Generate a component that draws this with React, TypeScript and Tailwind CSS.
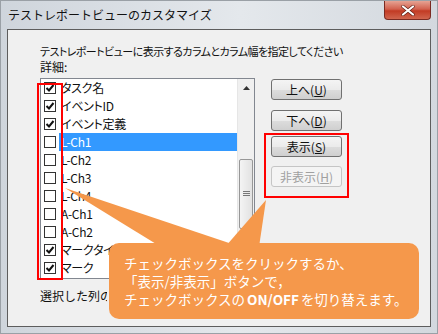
import * as React from "react";

const jp = "font-['Noto_Sans_CJK_JP','Noto_Sans',sans-serif]";

const columns = [
  {label: "タスク名", checked: true},
  {label: "イベントID", checked: true},
  {label: "イベント定義", checked: true},
  {label: "L-Ch1", checked: false, selected: true},
  {label: "L-Ch2", checked: false},
  {label: "L-Ch3", checked: false},
  {label: "L-Ch4", checked: false},
  {label: "A-Ch1", checked: false},
  {label: "A-Ch2", checked: false},
  {label: "マークタイプ", checked: true},
  {label: "マーク", checked: true}
];

function CheckBox({checked}: {checked: boolean}) {
  return (
    <div className="w-[12px] h-[12px] border border-[#333] bg-white flex items-center justify-center shrink-0">
      {checked && (
        <svg width="10" height="10" viewBox="0 0 10 10">
          <path d="M1.5 5 L4 7.5 L8.5 2" fill="none" stroke="#111" strokeWidth="2" />
        </svg>
      )}
    </div>
  );
}

function Row({label, checked, selected}: {label: string; checked: boolean; selected?: boolean}) {
  return (
    <div className="flex items-center h-[18px] pl-[3px]">
      <CheckBox checked={checked} />
      <div
        className={`ml-[3px] flex-1 h-full flex items-center pl-[2px] ${
          selected ? "bg-[#3399ff] text-white" : "text-[#111]"
        }`}>
        {label}
      </div>
    </div>
  );
}

function WinButton({children, disabled}: {children: React.ReactNode; disabled?: boolean}) {
  return (
    <div
      className={`w-[71px] h-[21px] rounded-[3px] border flex items-center justify-center text-[12px] ${
        disabled
          ? "border-[#c5c5c5] bg-[#f4f4f4] text-[#a0a0a0]"
          : "border-[#707070] bg-[linear-gradient(#f4f4f4_0%,#ebebeb_50%,#dddddd_50%,#cfcfcf_100%)] text-[#111]"
      }`}>
      {children}
    </div>
  );
}

function ScrollBar() {
  return (
    <div className="w-[17px] h-full flex flex-col bg-[#f0f0f0] border-l border-[#e6e6e6]">
      <div className="h-[17px] flex items-center justify-center">
        <svg width="7" height="4" viewBox="0 0 7 4">
          <path d="M0 4 L3.5 0 L7 4 Z" fill="#333" />
        </svg>
      </div>
      <div className="h-[63px]" />
      <div className="mx-[1px] h-[70px] rounded-[2px] border border-[#979797] bg-[linear-gradient(90deg,#f4f4f4,#e2e2e2)] flex items-center justify-center">
        <svg width="7" height="6" viewBox="0 0 7 6">
          <path d="M0 0.5 H7 M0 2.5 H7 M0 4.5 H7" stroke="#777" strokeWidth="1" />
        </svg>
      </div>
      <div className="flex-1" />
    </div>
  );
}

export default function App() {
  return (
    <div className={`relative w-[438px] h-[334px] overflow-hidden bg-[linear-gradient(90deg,#cfd5dc,#e4e8ec_55%,#d3d8de)] border border-[#9aa0a6] flex flex-col ${jp}`}>
      {/* title bar */}
      <div className="h-[28px] flex items-start justify-between shrink-0">
        <div className="pl-[7px] pt-[6px] text-[12px] leading-[16px] text-[#111]">
          テストレポートビューのカスタマイズ
        </div>
        <div className="mr-[6px] w-[47px] h-[19px] rounded-b-[4px] border border-t-0 border-[#7a2b22] bg-[linear-gradient(#e6a393_0%,#d2614e_45%,#c23b24_55%,#d0654e_100%)] flex items-center justify-center">
          <svg width="14" height="11" viewBox="0 0 14 11">
            <path d="M2 1.5 L12 9.5 M12 1.5 L2 9.5" stroke="#5a1a10" strokeWidth="3.4" strokeLinecap="round" />
            <path d="M2 1.5 L12 9.5 M12 1.5 L2 9.5" stroke="#fff" strokeWidth="2.2" strokeLinecap="round" />
          </svg>
        </div>
      </div>

      {/* client area */}
      <div className="mx-[6px] mb-[6px] flex-1 bg-[#f0f0f0] border border-[#5d5d5d] pl-[32px] pt-[13px] text-[12px] leading-[16px] text-[#111]">
        <div className="whitespace-nowrap text-[11px] [font-feature-settings:'palt'] tracking-tighter">
          テストレポートビューに表示するカラムとカラム幅を指定してください
        </div>
        <div>詳細:</div>
        <div className="flex mt-[3px]">
          <div className="w-[215px] h-[201px] border border-[#828790] bg-white flex">
            <div className="flex-1 [font-feature-settings:'palt'] tracking-tight">
              {columns.map(c => (
                <Row key={c.label} label={c.label} checked={c.checked} selected={c.selected} />
              ))}
            </div>
            <ScrollBar />
          </div>
          <div className="ml-[16px] flex flex-col">
            <div className="mt-[1px]">
              <WinButton>
                上へ(<span className="underline">U</span>)
              </WinButton>
            </div>
            <div className="mt-[10px]">
              <WinButton>
                下へ(<span className="underline">D</span>)
              </WinButton>
            </div>
            <div className="mt-[5px]">
              <WinButton>
                表示(<span className="underline">S</span>)
              </WinButton>
            </div>
            <div className="mt-[9px]">
              <WinButton disabled>
                非表示(<span className="underline">H</span>)
              </WinButton>
            </div>
          </div>
        </div>
        <div className="mt-[9px] w-[67px] overflow-hidden whitespace-nowrap">
          選択した列の幅:
        </div>
      </div>

      {/* annotation: red frames */}
      <div className="absolute left-[36px] top-[82px] w-[26px] h-[197px] border-2 border-[#ff0000]" />
      <div className="absolute left-[263px] top-[132px] w-[85px] h-[65px] border-2 border-[#ff0000]" />

      {/* annotation: callout */}
      <svg className="absolute left-0 top-0" width="438" height="334" viewBox="0 0 438 334">
        <polygon points="64,187 240,246 160,246" fill="#f5984b" />
        <polygon points="265,199 258,246 224,246" fill="#f5984b" />
      </svg>
      <div className="absolute left-[108px] top-[242px] w-[310px] h-[76px] rounded-[10px] bg-[#f5984b] pl-[15px] pt-[11px] text-white text-[13.5px] leading-[18px]">
        <div>チェックボックスをクリックするか、</div>
        <div>「表示/非表示」ボタンで，</div>
        <div>
          チェックボックスの<span className="font-bold mx-[2px]">ON/OFF</span>を切り替えます。
        </div>
      </div>
    </div>
  );
}
